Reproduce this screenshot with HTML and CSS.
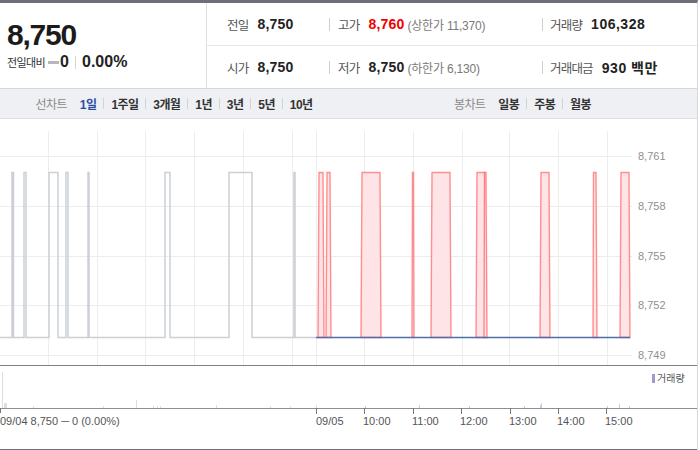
FILE: index.html
```html
<!DOCTYPE html>
<html lang="ko">
<head>
<meta charset="utf-8">
<link rel="stylesheet" href="styles.css">
</head>
<body>
<div class="wrap">
  <div class="header">
    <div class="now">
      <div class="price">8,750</div>
      <div class="change">
        <span class="chg-label">전일대비</span>
        <span class="flat"></span>
        <span class="chg-num">0</span>
        <span class="vsep"></span>
        <span class="chg-num">0.00%</span>
      </div>
    </div>
    <div class="info">
      <div class="row">
        <div class="cell c1"><span class="lbl">전일</span><span class="val">8,750</span></div>
        <div class="cell c2"><span class="lbl">고가</span><span class="val up">8,760</span><span class="sub">(상한가 11,370)</span></div>
        <div class="cell c3"><span class="lbl">거래량</span><span class="val">106,328</span></div>
      </div>
      <div class="row">
        <div class="cell c1"><span class="lbl">시가</span><span class="val">8,750</span></div>
        <div class="cell c2"><span class="lbl">저가</span><span class="val">8,750</span><span class="sub">(하한가 6,130)</span></div>
        <div class="cell c3"><span class="lbl">거래대금</span><span class="val">930 백만</span></div>
      </div>
    </div>
  </div>
  <div class="tabs">
    <div class="group">
      <span class="gtitle">선차트</span>
      <span class="tab on">1일</span>
      <span class="tab sep">1주일</span>
      <span class="tab sep">3개월</span>
      <span class="tab sep">1년</span>
      <span class="tab sep">3년</span>
      <span class="tab sep">5년</span>
      <span class="tab sep">10년</span>
    </div>
    <div class="group">
      <span class="gtitle">봉차트</span>
      <span class="tab">일봉</span>
      <span class="tab sep">주봉</span>
      <span class="tab sep">월봉</span>
    </div>
  </div>
  <svg class="chart" width="698" height="331" viewBox="0 0 698 331" xmlns="http://www.w3.org/2000/svg">
    <g stroke="#ededed" stroke-width="1">
      <line x1="0" y1="37.5" x2="632" y2="37.5"/>
      <line x1="0" y1="87.5" x2="632" y2="87.5"/>
      <line x1="0" y1="137.5" x2="632" y2="137.5"/>
      <line x1="0" y1="186.5" x2="632" y2="186.5"/>
      <line x1="0" y1="236.5" x2="632" y2="236.5"/>
      <line x1="48.5" y1="12" x2="48.5" y2="246"/>
      <line x1="97.5" y1="12" x2="97.5" y2="246"/>
      <line x1="145.5" y1="12" x2="145.5" y2="246"/>
      <line x1="194.5" y1="12" x2="194.5" y2="246"/>
      <line x1="243.5" y1="12" x2="243.5" y2="246"/>
      <line x1="292.5" y1="12" x2="292.5" y2="246"/>
      <line x1="316.5" y1="12" x2="316.5" y2="246"/>
      <line x1="364.5" y1="12" x2="364.5" y2="246"/>
      <line x1="413.5" y1="12" x2="413.5" y2="246"/>
      <line x1="462.5" y1="12" x2="462.5" y2="246"/>
      <line x1="509.5" y1="12" x2="509.5" y2="246"/>
      <line x1="558.5" y1="12" x2="558.5" y2="246"/>
      <line x1="607.5" y1="12" x2="607.5" y2="246"/>
    </g>
    <path d="M0 218.5 H12 V53.5 H13.5 V218.5 H24 V53.5 H26 V218.5 H49 V53.5 H58 V218.5 H66 V53.5 H68 V218.5 H88 V53.5 H89 V218.5 H165 V53.5 H170 V218.5 H229 V53.5 H252 V218.5 H294 V53.5 H295 V218.5 H316" fill="none" stroke="#ccd0d5" stroke-width="1.5"/>
    <g fill="#fee4e7" stroke="#ff4d4d" stroke-opacity="0.6" stroke-width="1.4">
      <polygon points="318,218.5 319,53.5 323,53.5 324,218.5"/>
      <polygon points="326,218.5 327,53.5 330,53.5 331,218.5"/>
      <polygon points="361,218.5 362,53.5 380,53.5 381,218.5"/>
      <polygon points="412,218.5 412.5,53.5 413.5,53.5 414,218.5"/>
      <polygon points="431,218.5 432,53.5 450,53.5 451,218.5"/>
      <polygon points="476,218.5 477,53.5 485,53.5 486,218.5"/>
      <polygon points="484,218.5 484.5,53.5 486,53.5 487,218.5"/>
      <polygon points="540,218.5 541,53.5 549,53.5 550,218.5"/>
      <polygon points="593,218.5 593.5,53.5 596,53.5 597,218.5"/>
      <polygon points="620,218.5 621,53.5 629,53.5 630,218.5"/>
    </g>
    <line x1="316" y1="218.5" x2="630" y2="218.5" stroke="#4f6ea8" stroke-width="1.3"/>
    <g class="axis" fill="#8f8f8f" font-size="11">
      <text x="638" y="41">8,761</text>
      <text x="638" y="91">8,758</text>
      <text x="638" y="141">8,755</text>
      <text x="638" y="190">8,752</text>
      <text x="638" y="240">8,749</text>
    </g>
    <line x1="0" y1="246.5" x2="698" y2="246.5" stroke="#7d7f83" stroke-width="1"/>
    <rect x="652" y="255" width="3" height="9" fill="#a497cf"/>
    <text class="axis" x="657" y="263" font-size="10" fill="#555">거래량</text>
    <g fill="#dcdde0">
      <rect x="2" y="253" width="1" height="36"/>
      <rect x="4" y="284" width="3" height="5"/>
      <rect x="33" y="287" width="1" height="2"/>
      <rect x="103" y="287" width="1" height="2"/>
      <rect x="136" y="281" width="1" height="8"/>
      <rect x="153" y="287" width="1" height="2"/>
      <rect x="157" y="287" width="1" height="2"/>
      <rect x="160" y="287" width="1" height="2"/>
      <rect x="216" y="286" width="1" height="3"/>
      <rect x="270" y="287" width="1" height="2"/>
      <rect x="290" y="287" width="1" height="2"/>
      <rect x="316" y="286" width="1" height="3"/>
    </g>
    <g fill="#cfc6e6">
      <rect x="365" y="287" width="1" height="2"/>
      <rect x="419" y="286" width="1" height="3"/>
      <rect x="469" y="287" width="1" height="2"/>
      <rect x="524" y="287" width="1" height="2"/>
      <rect x="540" y="286" width="1" height="3"/>
      <rect x="541" y="284" width="1" height="5"/>
      <rect x="607" y="287" width="1" height="2"/>
      <rect x="619" y="285" width="1" height="4"/>
      <rect x="629" y="287" width="1" height="2"/>
    </g>
    <line x1="0" y1="289.5" x2="698" y2="289.5" stroke="#8d8f93" stroke-width="1"/>
    <g stroke="#777" stroke-width="1">
      <line x1="0.5" y1="289" x2="0.5" y2="294"/>
      <line x1="316.5" y1="289" x2="316.5" y2="295"/>
      <line x1="364.5" y1="289" x2="364.5" y2="295"/>
      <line x1="413.5" y1="289" x2="413.5" y2="295"/>
      <line x1="461.5" y1="289" x2="461.5" y2="295"/>
      <line x1="510.5" y1="289" x2="510.5" y2="295"/>
      <line x1="558.5" y1="289" x2="558.5" y2="295"/>
      <line x1="606.5" y1="289" x2="606.5" y2="295"/>
    </g>
    <g class="axis" fill="#555" font-size="11">
      <text x="0" y="306">09/04  8,750 ─ 0 (0.00%)</text>
      <text x="316" y="306">09/05</text>
      <text x="363" y="306">10:00</text>
      <text x="412" y="306">11:00</text>
      <text x="460" y="306">12:00</text>
      <text x="509" y="306">13:00</text>
      <text x="557" y="306">14:00</text>
      <text x="605" y="306">15:00</text>
    </g>
    <line x1="0" y1="330.5" x2="698" y2="330.5" stroke="#6f7175" stroke-width="1"/>
  </svg>
</div>
</body>
</html>
```
FILE: styles.css
```css
html, body {
  margin: 0;
  padding: 0;
  background: #ffffff;
}
body {
  font-family: "Liberation Sans", Arial, "Noto Sans CJK KR", sans-serif;
  color: #222;
}
.wrap {
  width: 697px;
  border-right: 1px solid #d6d7db;
  border-top: 3px solid #6d7076;
  overflow: hidden;
}
.header {
  display: flex;
  height: 85px;
  border-bottom: 1px solid #d5d7db;
}
.now {
  width: 207px;
  border-right: 1px solid #dedfe2;
  padding: 17px 0 0 7px;
  box-sizing: border-box;
}
.price {
  font-size: 30px;
  font-weight: bold;
  letter-spacing: -1.2px;
  line-height: 30px;
  color: #1b1b1b;
}
.change {
  display: flex;
  align-items: center;
  margin-top: 3px;
  height: 18px;
}
.chg-label {
  font-family: "Noto Sans CJK KR", sans-serif;
  font-size: 11px;
  letter-spacing: -0.6px;
  color: #333;
}
.flat {
  display: inline-block;
  width: 11px;
  height: 3px;
  background: #b5b7bb;
  margin: 0 1px 0 3px;
}
.chg-num {
  font-size: 16px;
  font-weight: bold;
  color: #222;
}
.vsep {
  display: inline-block;
  width: 1px;
  height: 13px;
  background: #d6d6d6;
  margin: 0 6px;
}
.info {
  flex: 1;
  display: flex;
  flex-direction: column;
}
.row {
  height: 42px;
  display: flex;
  align-items: center;
}
.row + .row {
  border-top: 1px solid #e8e8ea;
}
.cell {
  display: flex;
  align-items: center;
  box-sizing: border-box;
}
.c1 {
  width: 122px;
  padding-left: 20px;
}
.c2 {
  width: 213px;
  padding-left: 8px;
  border-left: 1px solid #cfcfd2;
  height: 13px;
}
.c3 {
  flex: 1;
  padding-left: 7px;
  border-left: 1px solid #cfcfd2;
  height: 13px;
}
.lbl {
  font-family: "Noto Sans CJK KR", sans-serif;
  font-size: 12.5px;
  letter-spacing: -0.8px;
  color: #555;
  margin-right: 9px;
}
.val {
  font-size: 14px;
  font-weight: bold;
  color: #222;
  letter-spacing: 0.2px;
}
.c3 .val {
  letter-spacing: 0.5px;
}
.val.up {
  color: #f00000;
}
.sub {
  font-size: 12px;
  color: #7a7a7a;
  margin-left: 3px;
  letter-spacing: -0.2px;
}
.tabs {
  height: 29px;
  background: #eff0f4;
  border-bottom: 1px solid #dcdde1;
  display: grid;
  grid-template-columns: 348px 1fr;
}
.group {
  display: flex;
  align-items: center;
  justify-content: center;
  font-family: "Liberation Sans", Arial, "Noto Sans CJK KR", sans-serif;
  font-size: 12px;
}
.gtitle {
  color: #8a8a8a;
  letter-spacing: -0.6px;
  margin-right: 13px;
}
.tab {
  font-weight: bold;
  color: #333;
  letter-spacing: -0.6px;
  display: flex;
  align-items: center;
}
.tab.on {
  color: #2b4ea2;
}
.tab.sep::before {
  content: "";
  display: inline-block;
  width: 1px;
  height: 11px;
  background: #d2d3d7;
  margin: 0 7px;
}
.chart {
  display: block;
}
.axis {
  font-family: "Liberation Sans", Arial, "Noto Sans CJK KR", sans-serif;
}
```
